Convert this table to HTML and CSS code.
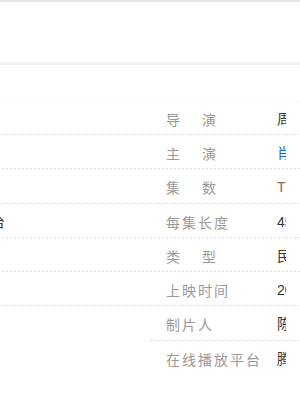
FILE: index.html
```html
<!DOCTYPE html>
<html lang="zh">
<head>
<meta charset="utf-8">
<link rel="stylesheet" href="styles.css">
</head>
<body>
<div class="topbar"></div>
<div class="band"></div>
<div class="info">
  <dl class="col">
    <div class="row"><dt class="lbl">中文名</dt><dd class="val">风</dd></div>
    <div class="row"><dt class="lbl">外文名</dt><dd class="val">T</dd></div>
    <div class="row"><dt class="lbl">类型</dt><dd class="val">剧</dd></div>
    <div class="row"><dt class="lbl">出品平台</dt><dd class="val">电台</dd></div>
    <div class="row"><dt class="lbl">出品公司</dt><dd class="val">华</dd></div>
    <div class="row"><dt class="lbl">拍摄地点</dt><dd class="val">横</dd></div>
    <div class="row last"><dt class="lbl">编剧</dt><dd class="val">王</dd></div>
  </dl>
  <dl class="col right">
    <div class="row"><dt class="lbl">导<span class="gap"></span>演</dt><dd class="val">周游</dd></div>
    <div class="row"><dt class="lbl">主<span class="gap"></span>演</dt><dd class="val link">肖战</dd></div>
    <div class="row"><dt class="lbl">集<span class="gap"></span>数</dt><dd class="val tba">TBA</dd></div>
    <div class="row"><dt class="lbl">每集长度</dt><dd class="val">45分钟</dd></div>
    <div class="row"><dt class="lbl">类<span class="gap"></span>型</dt><dd class="val">民国</dd></div>
    <div class="row"><dt class="lbl">上映时间</dt><dd class="val">2024年</dd></div>
    <div class="row"><dt class="lbl">制片人</dt><dd class="val">陈思</dd></div>
    <div class="row last"><dt class="lbl">在线播放平台</dt><dd class="val">腾讯视频</dd></div>
  </dl>
</div>
</body>
</html>
```
FILE: styles.css
```css
html, body {
  margin: 0;
  padding: 0;
  background: #fff;
  overflow: hidden;
}
body {
  width: 300px;
  height: 400px;
  font-family: "Liberation Sans", "Noto Sans CJK SC", sans-serif;
  font-size: 14px;
}
.topbar {
  height: 62px;
  border-top: 2px solid #e6e6e6;
  box-sizing: border-box;
}
.band {
  height: 3px;
  background: #f1f1f1;
}
.info {
  display: flex;
  width: 600px;
  margin-left: -150px;
  margin-top: 35.7px;
  background-image: repeating-linear-gradient(90deg, #f3f3f3 0 2px, transparent 2px 4px);
  background-size: 100% 1px;
  background-repeat: no-repeat;
}
.col {
  width: 300px;
  margin: 0;
  padding: 0;
}
.row {
  display: flex;
  height: 34.3px;
  box-sizing: border-box;
  padding-top: 7px;
  line-height: 22px;
  background-image: repeating-linear-gradient(90deg, #dcdcdc 0 2px, transparent 2px 4px);
  background-size: 100% 1px;
  background-position: 0 100%;
  background-repeat: no-repeat;
}
.row.last {
  background-image: none;
}
.lbl {
  flex: 0 0 127px;
  box-sizing: border-box;
  padding-left: 16px;
  margin: 0;
  color: #999;
  letter-spacing: 2px;
  white-space: nowrap;
  font-family: "Noto Sans CJK SC", sans-serif;
}
.gap {
  display: inline-block;
  width: 20px;
}
.val {
  margin: 0;
  color: #333;
  white-space: nowrap;
}
.right .val {
  width: 9px;
  overflow: hidden;
}
.val.link {
  color: #136ec2;
}
.val.tba {
  color: #8a6652;
}
```
